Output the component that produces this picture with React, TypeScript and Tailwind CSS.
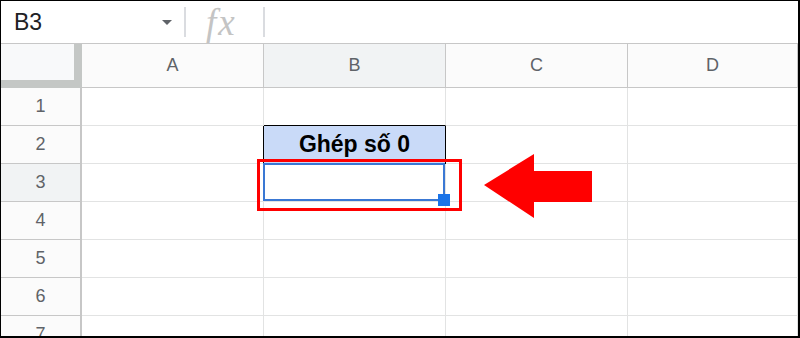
import React from "react";

const cols = ["A", "B", "C", "D"];
const rows = [1, 2, 3, 4, 5, 6, 7];

export default function App() {
  return (
    <div
      className="relative w-[800px] h-[338px] overflow-hidden bg-white border-t border-l border-r-2 border-b-2 border-black"
      style={{ fontFamily: '"Liberation Sans", Arial, sans-serif' }}
    >
      {/* formula bar */}
      <div className="flex items-center h-[43px] border-b border-[#c7c7c7]">
        <div className="flex items-center justify-between w-[183px] pl-[13px] pr-[12px]">
          <span className="text-[23px] leading-none text-[#202124]">B3</span>
          <svg width="10" height="5" viewBox="0 0 10 5" className="mt-[1px]">
            <path d="M0 0 L10 0 L5 5 Z" fill="#5f6368" />
          </svg>
        </div>
        <div className="w-[2px] h-[30px] bg-[#dadce0]" />
        <div className="w-[77px] flex items-center pl-[20px]">
          <span
            className="italic text-[37px] leading-none text-[#c4c4c4] tracking-[2px]"
            style={{ fontFamily: '"Liberation Serif", "Times New Roman", serif' }}
          >
            fx
          </span>
        </div>
        <div className="w-[2px] h-[30px] bg-[#dadce0]" />
      </div>

      {/* grid */}
      <div className="grid grid-cols-[81px_182px_182px_182px_1fr] grid-rows-[44px_repeat(7,38px)]">
        {/* corner */}
        <div className="bg-[#f8f9fa] border-r-[8px] border-b-[8px] border-[#c4c7c5]" />
        {cols.map((c) => (
          <div
            key={c}
            className={`flex items-center justify-center text-[18px] text-[#5f6368] border-r border-b border-[#c7c7c7] ${
              c === "B" ? "bg-[#f1f3f4]" : "bg-[#fbfbfb]"
            }`}
          >
            {c}
          </div>
        ))}
        {rows.map((r) => (
          <React.Fragment key={r}>
            <div
              className={`flex items-center justify-center text-[18px] text-[#5f6368] border-r-2 border-b border-[#c7c7c7] ${
                r === 3 ? "bg-[#f1f3f4]" : "bg-[#fbfbfb]"
              }`}
            >
              {r}
            </div>
            {cols.map((c) => {
              const isB2 = r === 2 && c === "B";
              const leftOfB2 = r === 2 && c === "A";
              const aboveB2 = r === 1 && c === "B";
              const isB3 = r === 3 && c === "B";
              return (
                <div
                  key={c}
                  className={`relative border-r border-b ${
                    isB2
                      ? "bg-[#c9daf8] border-black flex items-center justify-center"
                      : leftOfB2
                      ? "border-r-black border-b-[#e2e3e3]"
                      : aboveB2
                      ? "border-b-black border-r-[#e2e3e3]"
                      : "border-[#e2e3e3]"
                  } ${isB3 ? "z-10" : ""}`}
                >
                  {isB2 && (
                    <span className="font-bold text-[23px] leading-none text-black">Ghép số 0</span>
                  )}
                  {isB3 && (
                    <>
                      <div className="absolute left-[-1px] top-[-1px] right-0 bottom-0 border-[2px] border-[#3a78d4]" />
                      <div className="absolute left-[174px] top-[30px] w-[12px] h-[12px] bg-[#1a73e8]" />
                    </>
                  )}
                </div>
              );
            })}
          </React.Fragment>
        ))}
      </div>

      {/* annotation: red rectangle */}
      <div className="absolute left-[256px] top-[158px] w-[205px] h-[52px] border-[3px] border-[#ff0000] z-20" />
      {/* annotation: red arrow */}
      <svg className="absolute left-0 top-0 z-20" width="800" height="338" viewBox="0 0 800 338">
        <polygon
          points="483,184 533,153 533,170 591,170 591,201 533,201 533,217"
          fill="#ff0000"
        />
      </svg>
    </div>
  );
}
